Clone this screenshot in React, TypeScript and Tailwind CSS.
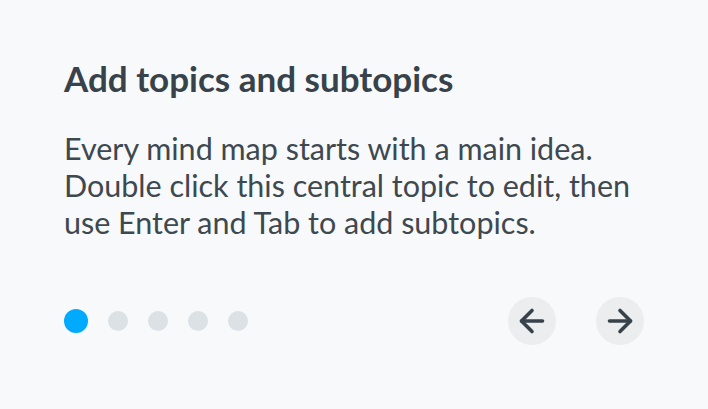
import { ArrowLeft, ArrowRight } from "lucide-react";

const steps = [0, 1, 2, 3, 4];

export default function App() {
  const active = 0;

  return (
    <div className="flex h-[409px] w-[708px] flex-col bg-[#f7f9fa] px-16 pt-[58px] font-['Lato',sans-serif] text-[#37424a]">
      <h2 className="text-[35px] font-bold leading-[40px]">Add topics and subtopics</h2>
      <p className="mt-[32px] text-[30.5px] leading-[37px] whitespace-nowrap text-[#3e484f]">
        Every mind map starts with a main idea.
        <br />
        Double click this central topic to edit, then
        <br />
        use Enter and Tab to add subtopics.
      </p>
      <div className="mt-[56px] flex items-center justify-between">
        <div className="flex items-center gap-5">
          {steps.map((step) =>
            step === active ? (
              <span key={step} className="h-6 w-6 rounded-full bg-[#00aaff]" />
            ) : (
              <span key={step} className="h-5 w-5 rounded-full bg-[#dce1e5]" />
            ),
          )}
        </div>
        <div className="flex items-center gap-10">
          <button
            type="button"
            className="flex h-12 w-12 items-center justify-center rounded-full bg-[#ebedef]"
            aria-label="Previous"
          >
            <ArrowLeft size={36} strokeWidth={2.4} />
          </button>
          <button
            type="button"
            className="flex h-12 w-12 items-center justify-center rounded-full bg-[#ebedef]"
            aria-label="Next"
          >
            <ArrowRight size={36} strokeWidth={2.4} />
          </button>
        </div>
      </div>
    </div>
  );
}
